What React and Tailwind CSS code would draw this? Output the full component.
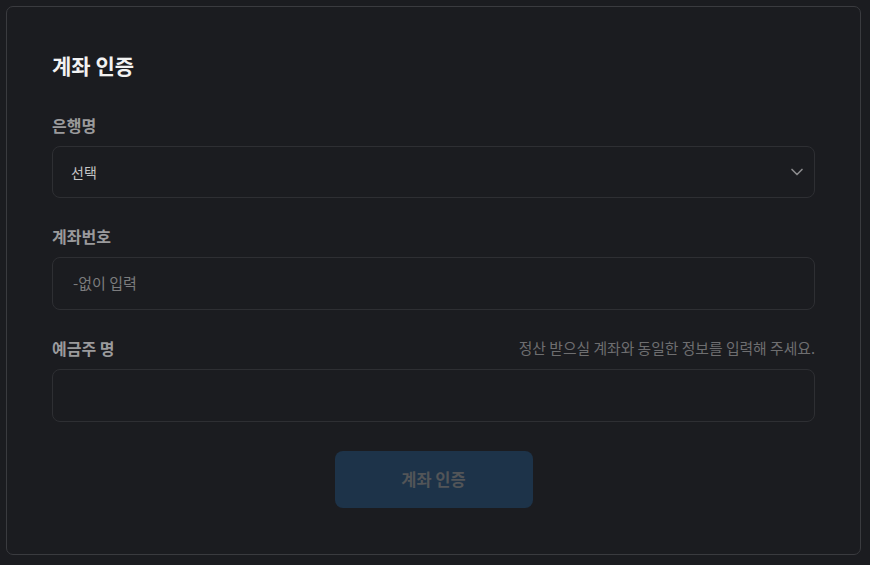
import { ChevronDown } from 'lucide-react';

export default function App() {
  return (
    <div
      className="h-[565px] w-[870px] bg-[#1b1c20] p-[6px] pr-[9px] pb-[10px]"
      style={{ fontFamily: '"Noto Sans CJK KR", "Noto Sans", sans-serif' }}
    >
      <div className="h-full rounded-[7px] border border-[#3a3b3f] bg-[#1b1c20] px-[45px] pt-[44px]">
        <h1 className="text-[21px] leading-[28px] font-bold text-[#f2f2f2]">계좌 인증</h1>

        {/* bank */}
        <div className="mt-[34px]">
          <label className="block text-[16px] leading-[24px] font-bold text-[#9a9a9c]">은행명</label>
          <div className="mt-[9px] flex h-[52px] items-center justify-between rounded-[8px] border border-[#2e2f33] pl-[18px] pr-[7px]">
            <span className="text-[14px] text-[#c4c4c6]">선택</span>
            <ChevronDown className="h-[20px] w-[20px] text-[#8a8a8c]" strokeWidth={2} />
          </div>
        </div>

        {/* account number */}
        <div className="mt-[26px]">
          <label className="block text-[16px] leading-[24px] font-bold text-[#9a9a9c]">계좌번호</label>
          <div className="mt-[9px] flex h-[53px] items-center rounded-[8px] border border-[#2e2f33] pl-[20px]">
            <span className="text-[15px] text-[#7c7c7e]">-없이 입력</span>
          </div>
        </div>

        {/* holder */}
        <div className="mt-[26px]">
          <div className="flex items-center justify-between">
            <label className="block text-[16px] leading-[24px] font-bold text-[#9a9a9c]">예금주 명</label>
            <span className="text-[14.8px] text-[#6e6e70]">정산 받으실 계좌와 동일한 정보를 입력해 주세요.</span>
          </div>
          <div className="mt-[9px] h-[53px] rounded-[8px] border border-[#2e2f33]" />
        </div>

        <div className="mt-[29px] flex justify-center">
          <button className="h-[57px] w-[198px] rounded-[8px] bg-[#1d3349] text-[16.5px] font-bold text-[#525558]">
            계좌 인증
          </button>
        </div>
      </div>
    </div>
  );
}
